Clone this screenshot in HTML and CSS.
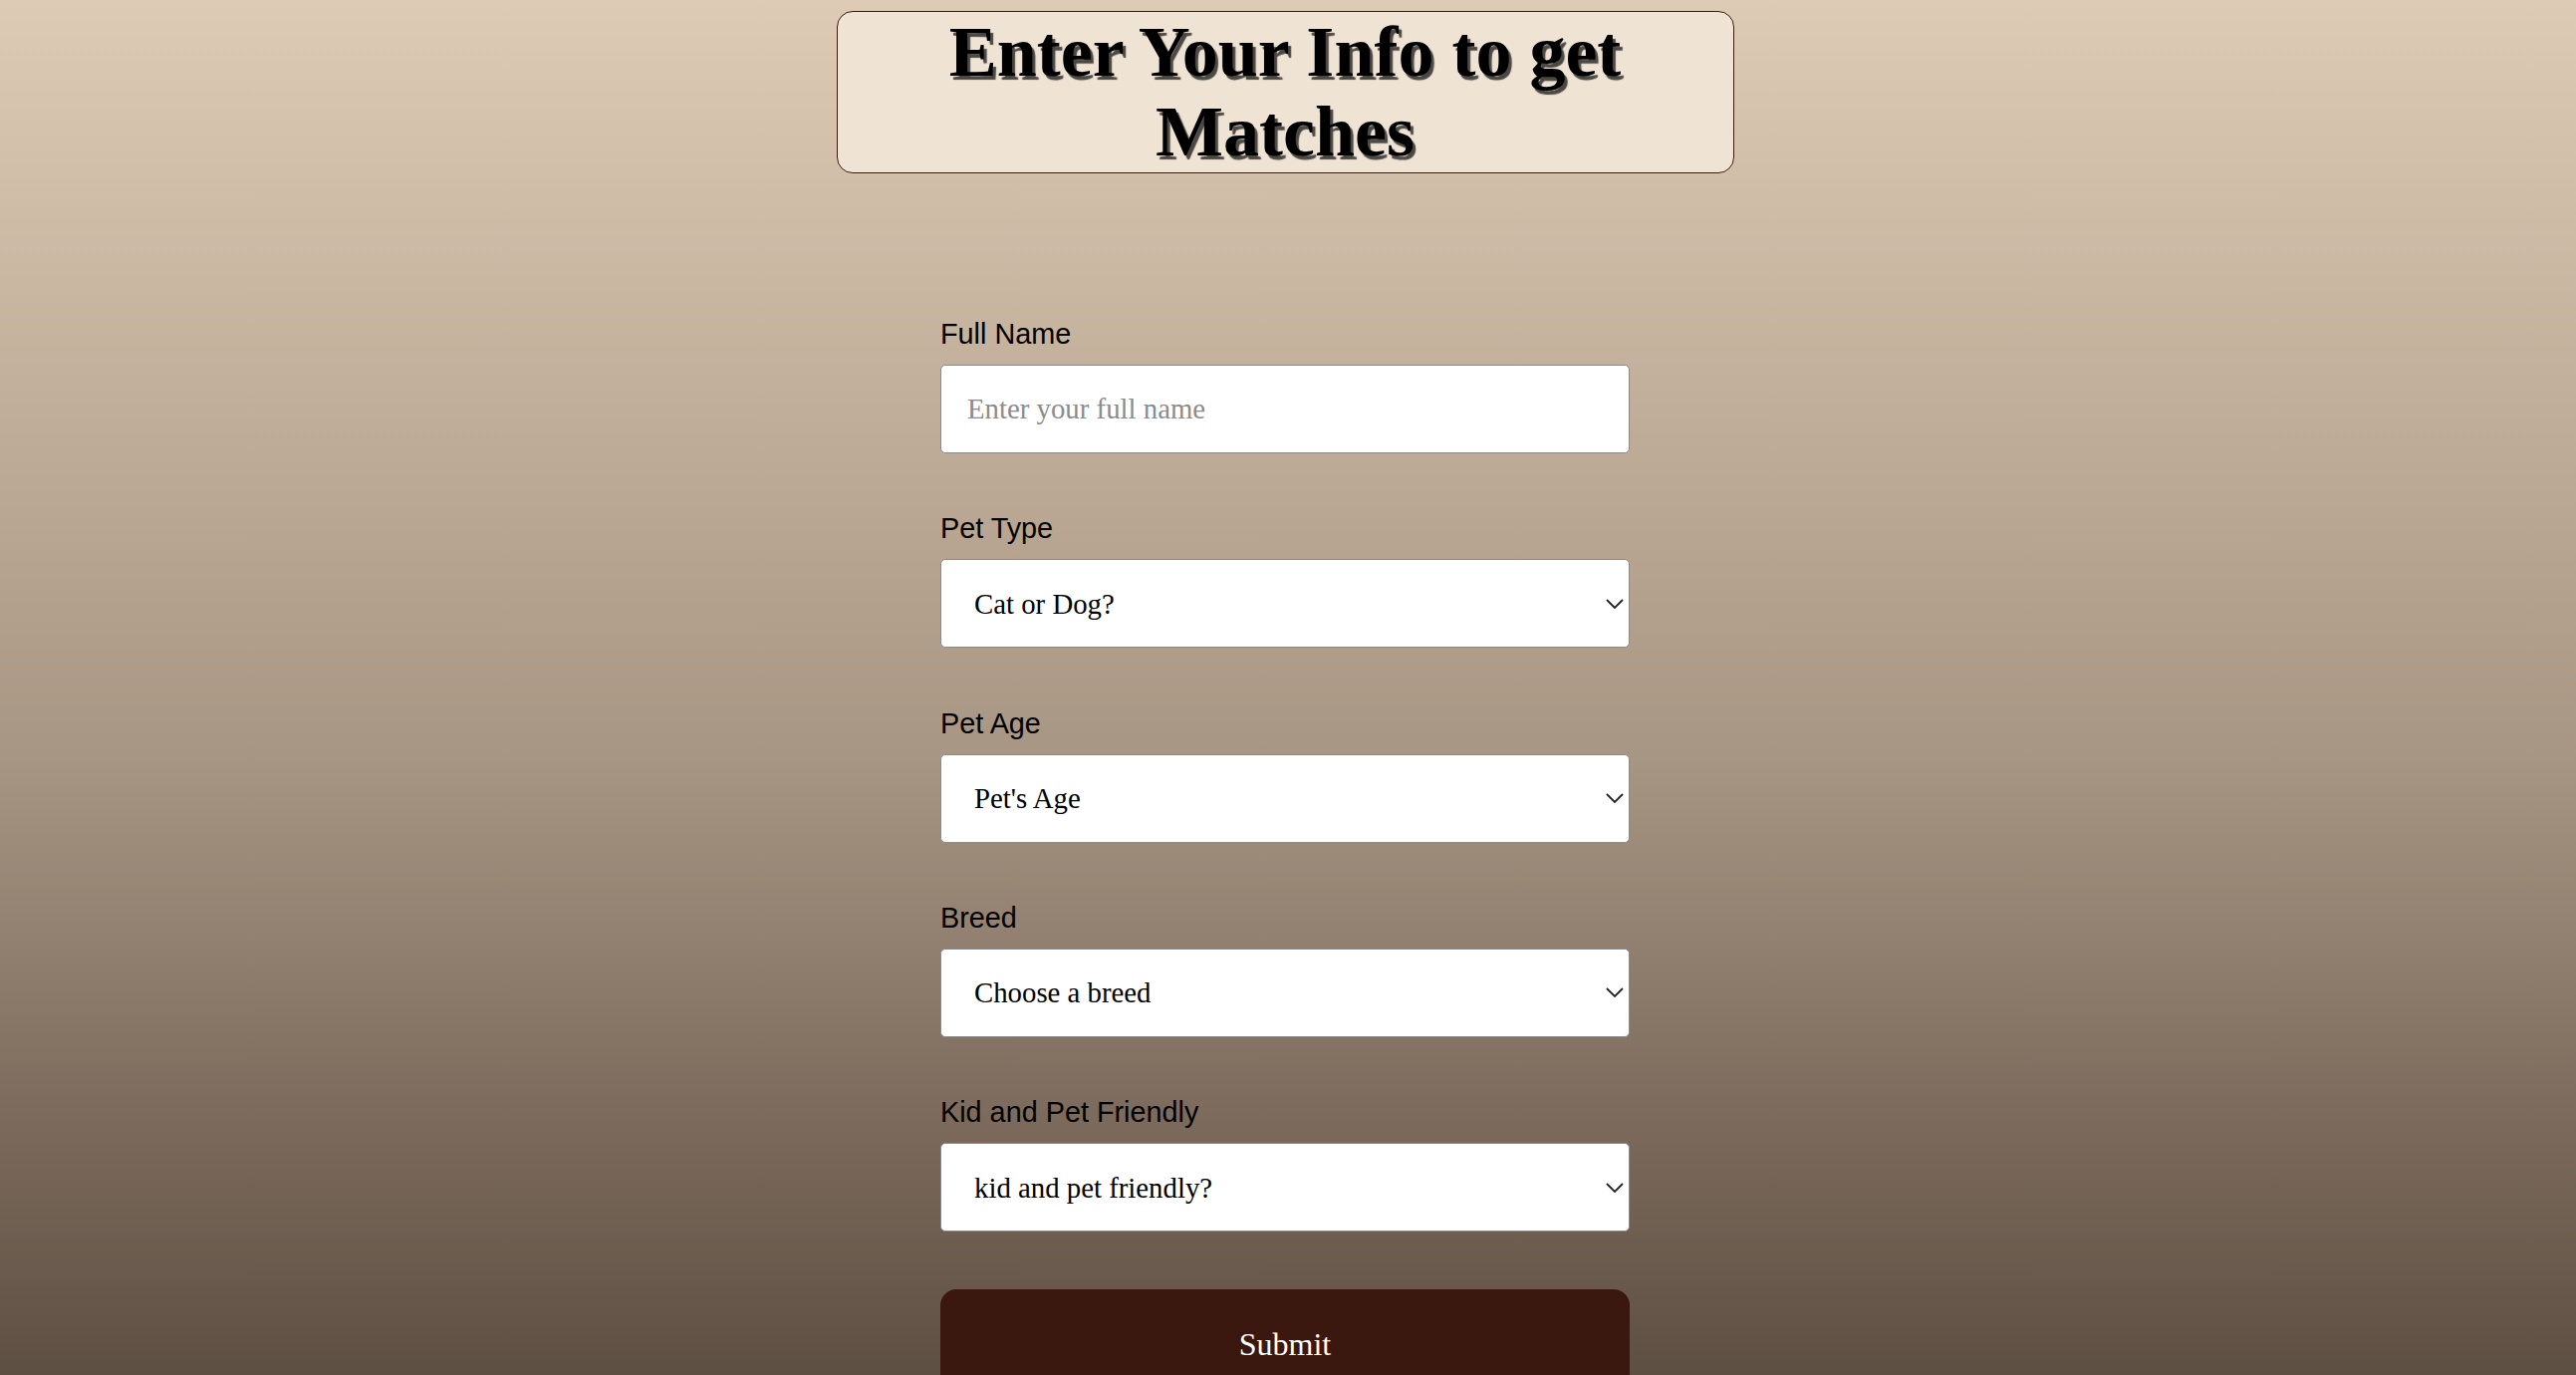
FILE: index.html
```html
<!DOCTYPE html>
<html lang="en">
<head>
<meta charset="utf-8">
<title>Enter Your Info to get Matches</title>
<link rel="stylesheet" href="styles.css">
</head>
<body>
<div class="page">
  <header class="title-box">
    <h1 class="title">Enter Your Info to get Matches</h1>
  </header>
  <form class="match-form">
    <div class="field">
      <label class="label" for="name">Full Name</label>
      <input class="control text-input" id="name" type="text" placeholder="Enter your full name">
    </div>
    <div class="field">
      <label class="label" for="type">Pet Type</label>
      <div class="select-wrap">
        <select class="control select" id="type"><option>Cat or Dog?</option></select>
        <svg class="chevron" viewBox="0 0 18 10" width="18" height="10"><path d="M1 1 L9 9 L17 1" fill="none" stroke="#222" stroke-width="1.8"/></svg>
      </div>
    </div>
    <div class="field">
      <label class="label" for="age">Pet Age</label>
      <div class="select-wrap">
        <select class="control select" id="age"><option>Pet's Age</option></select>
        <svg class="chevron" viewBox="0 0 18 10" width="18" height="10"><path d="M1 1 L9 9 L17 1" fill="none" stroke="#222" stroke-width="1.8"/></svg>
      </div>
    </div>
    <div class="field">
      <label class="label" for="breed">Breed</label>
      <div class="select-wrap">
        <select class="control select" id="breed"><option>Choose a breed</option></select>
        <svg class="chevron" viewBox="0 0 18 10" width="18" height="10"><path d="M1 1 L9 9 L17 1" fill="none" stroke="#222" stroke-width="1.8"/></svg>
      </div>
    </div>
    <div class="field">
      <label class="label" for="friendly">Kid and Pet Friendly</label>
      <div class="select-wrap">
        <select class="control select" id="friendly"><option>kid and pet friendly?</option></select>
        <svg class="chevron" viewBox="0 0 18 10" width="18" height="10"><path d="M1 1 L9 9 L17 1" fill="none" stroke="#222" stroke-width="1.8"/></svg>
      </div>
    </div>
    <button class="submit" type="button">Submit</button>
  </form>
</div>
</body>
</html>
```

FILE: styles.css
```css
html, body {
  margin: 0;
  padding: 0;
}

body {
  min-height: 100vh;
  background: linear-gradient(to bottom, #ddcbb5 0%, #c0ae9a 30%, #a89684 55%, #7e6d5e 80%, #5e4f43 100%);
  background-attachment: fixed;
  font-family: "Liberation Serif", "Times New Roman", serif;
}

.page {
  padding: 11px 6px 40px 0;
  display: flex;
  flex-direction: column;
  align-items: center;
}

.title-box {
  width: 901px;
  box-sizing: border-box;
  padding-bottom: 1px;
  background: #efe3d4;
  border: 1px solid #3f1a0e;
  border-radius: 16px;
}

.title {
  margin: 0;
  font-family: "Liberation Serif", "Times New Roman", serif;
  font-weight: bold;
  font-size: 72px;
  line-height: 80px;
  text-align: center;
  color: #000;
  text-shadow: 3px 4px 1px rgba(20, 20, 20, 0.75);
}

.match-form {
  width: 692px;
  margin-top: 145px;
  display: flex;
  flex-direction: column;
}

.field {
  display: flex;
  flex-direction: column;
  margin-bottom: 59.3px;
}

.label {
  font-family: "Liberation Sans", Arial, Helvetica, sans-serif;
  font-size: 28.8px;
  line-height: 32px;
  color: #000;
  margin-bottom: 15px;
}

.control {
  width: 100%;
  height: 89px;
  box-sizing: border-box;
  margin: 0;
  background: #fff;
  border: 1px solid #8a8a8a;
  border-radius: 5px;
  font-family: "Liberation Serif", "Times New Roman", serif;
  font-size: 28.8px;
  color: #000;
  outline: none;
}

.text-input {
  padding: 0 0 0 26px;
}

.text-input::placeholder {
  color: #8c8c8c;
}

.select-wrap {
  position: relative;
}

.select {
  -webkit-appearance: none;
  appearance: none;
  padding: 0 40px 0 33px;
}

.chevron {
  position: absolute;
  right: 6px;
  top: 50%;
  margin-top: -5px;
  pointer-events: none;
}

.submit {
  margin-top: -1px;
  width: 100%;
  height: 110px;
  border: none;
  border-radius: 16px;
  background: #3a180f;
  color: #fff;
  font-family: "Liberation Serif", "Times New Roman", serif;
  font-size: 32px;
  cursor: pointer;
}
```
